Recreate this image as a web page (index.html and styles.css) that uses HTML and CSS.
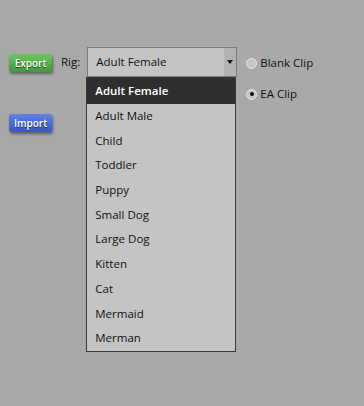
FILE: index.html
```html
<!DOCTYPE html>
<html lang="en">
<head>
    <meta charset="UTF-8">
    <meta name="viewport" content="width=device-width, initial-scale=1.0">
    <title>Rig Export</title>
    <link rel="stylesheet" href="styles.css">
</head>
<body>
    <div class="panel">
        <div class="buttons">
            <button class="btn btn-export">Export</button>
            <button class="btn btn-import">Import</button>
        </div>

        <label class="rig-label" for="rig">Rig:</label>

        <div class="select-wrap">
            <div class="select" id="rig">
                <span class="select-value">Adult Female</span>
                <span class="select-arrow"></span>
            </div>
            <ul class="dropdown">
                <li class="selected">Adult Female</li>
                <li>Adult Male</li>
                <li>Child</li>
                <li>Toddler</li>
                <li>Puppy</li>
                <li>Small Dog</li>
                <li>Large Dog</li>
                <li>Kitten</li>
                <li>Cat</li>
                <li>Mermaid</li>
                <li>Merman</li>
            </ul>
        </div>

        <div class="clips">
            <label class="radio"><span class="dot"></span>Blank Clip</label>
            <label class="radio"><span class="dot checked"></span>EA Clip</label>
        </div>
    </div>
</body>
</html>
```

FILE: styles.css
```css
body { margin: 0; background-color: #a9a9a9; font-family: "Open Sans", "Noto Sans", sans-serif; font-size: 11.5px; color: #111; height: 406px; }
.panel { display: flex; align-items: flex-start; padding: 47px 0 0 9px; }

.buttons { display: flex; flex-direction: column; gap: 42px; padding-top: 7px; }
.btn { width: 43px; height: 18px; padding: 0; border: none; border-radius: 2px; font-family: inherit; font-size: 10px; font-weight: 600; color: white; text-shadow: 0 1px 1px rgba(0,0,0,0.6); box-shadow: 1px 2px 3px rgba(0,0,0,0.45); }
.btn-export { background: linear-gradient(#6ec65f, #419a39); }
.btn-import { background: linear-gradient(#5d82e4, #3a58c0); }

.rig-label { margin: 7px 7px 0 9px; line-height: 16px; }

.select-wrap { position: relative; width: 150px; }
.select { display: flex; height: 28px; border: 1px solid #7a7a7a; background-color: #c4c4c4; }
.select-value { flex: 1; padding-left: 8px; line-height: 28px; }
.select-arrow { width: 12px; background-color: #b2b2b2; position: relative; }
.select-arrow::after { content: ""; position: absolute; left: 3px; top: 12px; border-left: 3.5px solid transparent; border-right: 3.5px solid transparent; border-top: 4px solid #111; }

.dropdown { position: absolute; top: 30px; left: -1px; width: 148px; margin: 0; padding: 0; list-style: none; background-color: #c4c4c4; border: 1px solid #3a3a3a; }
.dropdown li { height: 24.7px; line-height: 24.7px; padding-left: 8px; }
.dropdown li.selected { background-color: #2f2f2f; color: white; font-weight: 600; height: 26px; line-height: 26px; }

.clips { display: flex; flex-direction: column; gap: 15px; margin: 8px 0 0 9px; }
.radio { display: flex; align-items: center; gap: 3px; line-height: 16px; }
.dot { width: 9px; height: 9px; border-radius: 50%; border: 1px solid #e6e6e6; background-color: #c6c6c6; position: relative; }
.dot.checked::after { content: ""; position: absolute; left: 2.5px; top: 2.5px; width: 4px; height: 4px; border-radius: 50%; background-color: #111; }
```
